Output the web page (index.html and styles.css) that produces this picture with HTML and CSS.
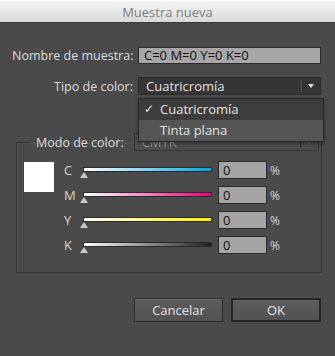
FILE: index.html
```html
<!DOCTYPE html>
<html lang="es">
  <head>
    <meta charset="UTF-8">
    <meta name="viewport" content="width=device-width, initial-scale=1.0">
    <title>Muestra nueva</title>
    <link rel="stylesheet" href="styles.css">
  </head>
  <body>
    <div class="dialog">
      <div class="titlebar">Muestra nueva</div>
      <div class="content">
        <div class="row name-row">
          <label class="row-label" for="name">Nombre de muestra:</label>
          <div class="text-field">C=0 M=0 Y=0 K=0</div>
        </div>
        <div class="row type-row">
          <span class="row-label">Tipo de color:</span>
          <div class="select">
            <span class="select-value">Cuatricromía</span>
            <span class="select-sep"></span>
            <span class="select-arrow"></span>
            <ul class="menu">
              <li class="menu-item checked"><span class="check">✓</span>Cuatricromía</li>
              <li class="menu-item hover">Tinta plana</li>
            </ul>
          </div>
        </div>

        <fieldset class="group">
          <legend class="group-legend">
            <span class="legend-label">Modo de color:</span>
            <div class="select select-mode">
              <span class="select-value">CMYK</span>
              <span class="select-sep"></span>
              <span class="select-arrow"></span>
            </div>
          </legend>
          <div class="group-body">
            <div class="swatch"></div>
            <div class="sliders">
              <div class="slider-row">
                <span class="channel">C</span>
                <div class="track track-c"><span class="thumb"></span></div>
                <div class="value">0</div>
                <span class="pct">%</span>
              </div>
              <div class="slider-row">
                <span class="channel">M</span>
                <div class="track track-m"><span class="thumb"></span></div>
                <div class="value">0</div>
                <span class="pct">%</span>
              </div>
              <div class="slider-row">
                <span class="channel">Y</span>
                <div class="track track-y"><span class="thumb"></span></div>
                <div class="value">0</div>
                <span class="pct">%</span>
              </div>
              <div class="slider-row">
                <span class="channel">K</span>
                <div class="track track-k"><span class="thumb"></span></div>
                <div class="value">0</div>
                <span class="pct">%</span>
              </div>
            </div>
          </div>
        </fieldset>

        <div class="buttons">
          <button class="btn">Cancelar</button>
          <button class="btn btn-default">OK</button>
        </div>
      </div>
    </div>
  </body>
</html>
```

FILE: styles.css
```css
html, body {
  margin: 0;
  padding: 0;
}
body {
  width: 335px;
  height: 356px;
  background: #4a4a4a;
  font-family: "Open Sans", "Liberation Sans", sans-serif;
  font-size: 12.5px;
  color: #dcdcdc;
  overflow: hidden;
}
.dialog {
  height: 356px;
  background: #4a4a4a;
}
.titlebar {
  height: 21px;
  line-height: 22px;
  text-align: center;
  font-size: 13px;
  color: #7c7c7c;
  background: linear-gradient(#f4f4f4, #e8e8e8 50%, #d9d9d9);
  border-top: 1px solid #fdfdfd;
  border-bottom: 1px solid #3a3a3a;
}
.content {
  padding: 24px 14px 0 12px;
}
.row {
  display: flex;
  align-items: center;
}
.row-label {
  width: 121px;
  text-align: right;
  margin-right: 5px;
  white-space: nowrap;
}
.text-field {
  flex: 1;
  height: 15px;
  line-height: 15px;
  padding: 0 5px;
  background: #a7a7a7;
  border: 1px solid #2c2c2c;
  color: #111;
  font-size: 13px;
}
.type-row {
  margin-top: 13px;
}
.select {
  position: relative;
  flex: 1;
  height: 16px;
  line-height: 16px;
  padding-left: 7px;
  background: #353535;
  border: 1px solid #2a2a2a;
  color: #e2e2e2;
  font-size: 13px;
}
.select-sep {
  position: absolute;
  right: 17px;
  top: 2px;
  width: 1px;
  height: 12px;
  background: #5a5a5a;
  border-right: 1px solid #2a2a2a;
}
.select-arrow {
  position: absolute;
  right: 6px;
  top: 6px;
  width: 0;
  height: 0;
  border-left: 3px solid transparent;
  border-right: 3px solid transparent;
  border-top: 4px solid #e6e6e6;
}
.menu {
  position: absolute;
  left: -1px;
  top: 20px;
  width: 184px;
  margin: 0;
  padding: 0;
  list-style: none;
  background: #555;
  border: 1px solid #262626;
  box-shadow: 0 2px 4px rgba(0, 0, 0, 0.35);
  z-index: 5;
  font-size: 13px;
}
.menu-item {
  height: 21px;
  line-height: 20px;
  padding-left: 21px;
  position: relative;
  color: #e4e4e4;
}
.menu-item.checked {
  background: #3c3c3c;
}
.check {
  position: absolute;
  left: 5px;
  top: 0;
  font-size: 12px;
}
.group {
  margin: 38px 0 0 4px;
  padding: 0 0 18px 7px;
  width: 296px;
  border: 1px solid #323232;
  box-shadow: inset 1px 1px 0 #555;
}
.group-legend {
  display: flex;
  align-items: center;
  padding: 0 2px 0 6px;
  margin-left: 6px;
  width: 283px;
}
.legend-label {
  margin-right: 10px;
}
.select-mode {
  background: #4d4d4d;
  border-color: #333;
  color: #9a9a9a;
}
.select-mode .select-arrow {
  border-top-color: #777;
}
.group-body {
  display: flex;
  margin-top: 10px;
}
.swatch {
  width: 30px;
  height: 30px;
  background: #fff;
  margin-top: 1px;
}
.sliders {
  margin-left: 10px;
}
.slider-row {
  display: flex;
  align-items: center;
  height: 18px;
  margin-bottom: 7px;
}
.slider-row:last-child {
  margin-bottom: 0;
}
.channel {
  width: 19px;
  font-size: 13px;
  color: #d6d6d6;
}
.track {
  position: relative;
  width: 127px;
  height: 3px;
  border: 1px solid #2a2a2a;
  margin-top: -2px;
}
.track-c {
  background: linear-gradient(to right, #fff, #00a6e8);
}
.track-m {
  background: linear-gradient(to right, #fff, #e5007d);
}
.track-y {
  background: linear-gradient(to right, #fff, #fff000);
}
.track-k {
  background: linear-gradient(to right, #fff, #1e1e1e);
}
.thumb {
  position: absolute;
  left: -4px;
  top: 4px;
  width: 0;
  height: 0;
  border-left: 4px solid transparent;
  border-right: 4px solid transparent;
  border-bottom: 6px solid #c9c9c9;
}
.value {
  margin-left: 6px;
  width: 43px;
  height: 16px;
  line-height: 16px;
  padding-left: 4px;
  background: #a4a4a4;
  border: 1px solid #2a2a2a;
  color: #111;
  font-size: 13px;
}
.pct {
  margin-left: 3px;
  font-size: 12px;
  color: #d6d6d6;
}
.buttons {
  display: flex;
  justify-content: flex-end;
  gap: 8px;
  margin-top: 25px;
}
.btn {
  height: 24px;
  padding: 0;
  font-family: inherit;
  font-size: 13px;
  color: #e2e2e2;
  background: linear-gradient(#5c5c5c, #535353);
  border: 1px solid #2c2c2c;
  box-shadow: inset 0 1px 0 #666;
}
.btn:first-child {
  width: 89px;
}
.btn-default {
  width: 90px;
  border: 2px solid #262626;
}
```
